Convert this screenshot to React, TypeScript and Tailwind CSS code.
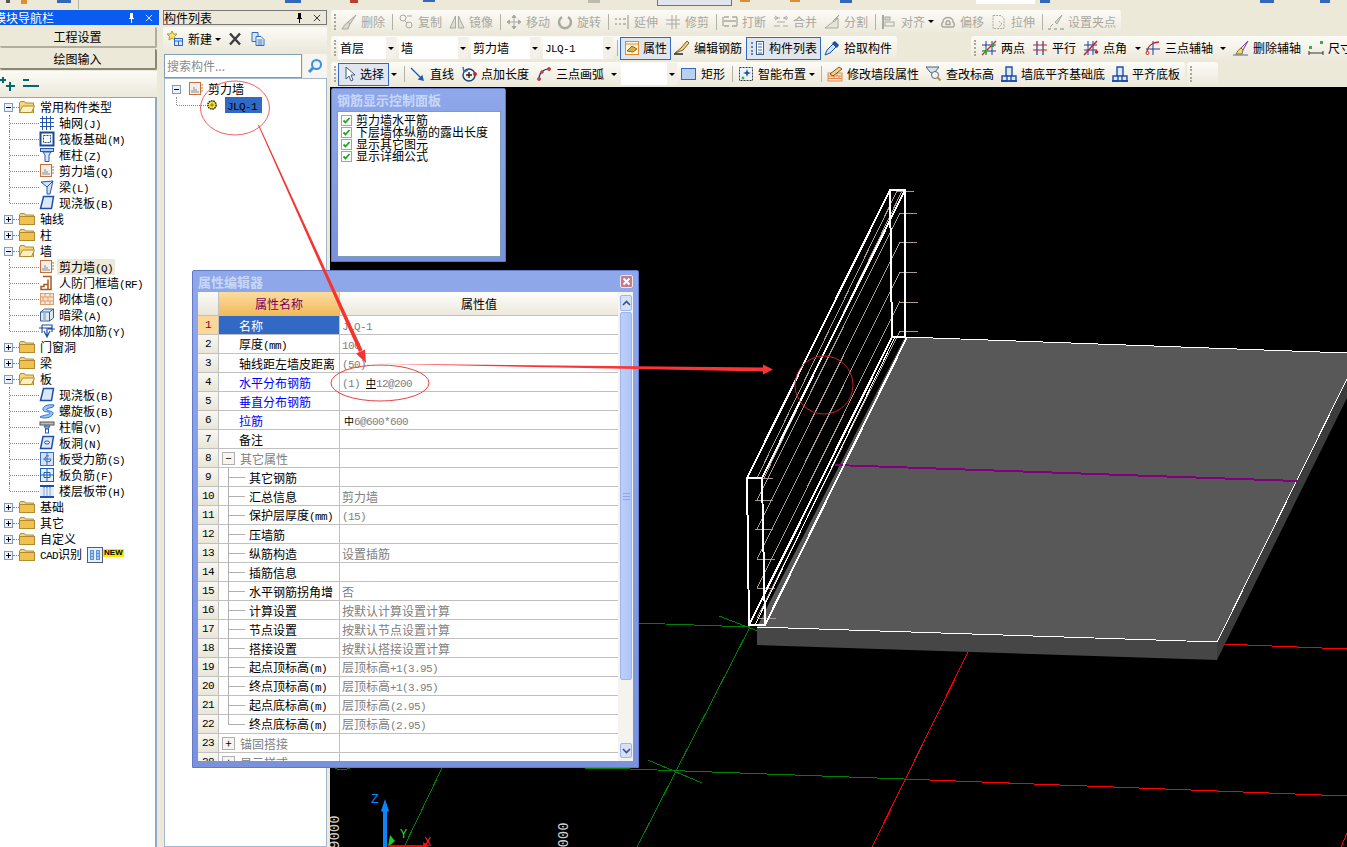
import React from "react";

const Txt = ({ t, className = "" }: { t: string; className?: string }) => (
  <span className={`whitespace-nowrap ${className}`}>
    {t.split(/([\x00-\x7f]+)/).map((s, i) =>
      i % 2 ? (
        <span key={i} className="font-['Liberation_Mono',monospace] text-[11px] tracking-[-0.6px]">
          {s}
        </span>
      ) : (
        s
      )
    )}
  </span>
);

const G = "#aaa99f";
const B = "#2456b0";
const icons: Record<string, React.ReactNode> = {
  grid: (
    <g stroke={B} fill="none">
      <path d="M3.5 1v14M7.5 1v14M11.5 1v14M1 3.5h14M1 7.5h14M1 11.5h14" />
    </g>
  ),
  raft: (
    <g fill="none" stroke="#1f4a8c">
      <rect x="1.5" y="1.5" width="13" height="13" strokeWidth="2" />
      <rect x="4.5" y="4.5" width="7" height="7" strokeDasharray="2 1" />
    </g>
  ),
  column: (
    <g stroke={B}>
      <rect x="1.5" y="1.5" width="13" height="3" fill="#b9d0f2" />
      <path d="M4 5l2 3v6.5h4V8l2-3z" fill="#dbe8fa" />
    </g>
  ),
  wall: (
    <g>
      <rect x="1.5" y="1.5" width="11" height="12" fill="#f2f0ec" stroke="#c8703c" />
      <path d="M3 12h8v-2H9V8H7V6H5v3H3z" fill="#bdbdbd" />
      <path d="M13 4h2M13 7h2M13 10h2" stroke="#c8703c" />
    </g>
  ),
  beam: (
    <g stroke={B}>
      <path d="M2 3l12-1-3 13H8V8z" fill="#cfe2f8" />
      <path d="M8 8l6-6" fill="none" />
    </g>
  ),
  slab: <path d="M4.5 1.5h10l-2 12h-11z" fill="#dbe8fa" stroke="#1c4fa8" strokeWidth="1.5" />,
  door: (
    <g fill="none" stroke="#a85a20" strokeWidth="1.5">
      <path d="M4 1.5h8v13H2v-3h3v-2H9M9 4.5V14" />
    </g>
  ),
  brick: (
    <g stroke="#e39a66" fill="#fbe6d4">
      <rect x="1.5" y="2.5" width="13" height="11" />
      <path d="M1.5 6h13M1.5 10h13M6 2.5V6M11 2.5V6M4 6v4M9 6v4M6 10v3.5M11 10v3.5" fill="none" />
    </g>
  ),
  hidden: (
    <g stroke="#365f8f">
      <path d="M1.5 5l4-3h9v9l-4 3h-9z" fill="#dfe9f4" />
      <path d="M1.5 5h9v9M10.5 5l4-3" fill="none" />
      <rect x="4" y="5.5" width="3" height="8" fill="#a9bfd8" stroke="none" />
    </g>
  ),
  wallbar: (
    <g fill="none" stroke="#1c4fa8" strokeWidth="1.2">
      <path d="M3 2h10v3H0M3 2v8M13 2v7M16 6H9M5 8l3 6 3-6M8 5v9" />
    </g>
  ),
  spiral: (
    <path d="M15 2C9 1 3 3 4 7c1 3 7 1 7 3 0 2-7 2-10 4 4 2 11 1 13-3 1-3-5-3-6-4-1-2 4-2 6-3z" fill="#9cc4f4" stroke="#2a6fd0" />
  ),
  cap: (
    <g stroke="#555">
      <rect x="1" y="3" width="14" height="3" fill="#bbb" />
      <path d="M5 7h6l-2 3H7z" fill="#8fb4e8" stroke={B} />
      <rect x="6.5" y="10" width="3" height="4" fill="#fff" stroke={B} />
    </g>
  ),
  hole: (
    <g stroke="#1c4fa8">
      <path d="M4 1.5h10.5l-2 12H1.5z" fill="#dbe8fa" strokeWidth="1.5" />
      <ellipse cx="8" cy="7.5" rx="2.5" ry="1.5" fill="#fff" />
    </g>
  ),
  force: (
    <g stroke="#3a6cc0" fill="#d5e3f8">
      <rect x="1.5" y="1.5" width="13" height="13" />
      <path d="M8 1.5v13M4 8h8a3 3 0 1 1-2-3" fill="none" />
    </g>
  ),
  neg: (
    <g stroke="#1c5fb0" fill="#e6effb">
      <rect x="1.5" y="1.5" width="13" height="13" />
      <path d="M1.5 8h13M8 1.5v13M5 5.5h6v5H5z" fill="none" />
    </g>
  ),
  band: (
    <g stroke="#1c4fa8" fill="none">
      <path d="M1 3h14M1 14h14" strokeWidth="2" />
      <path d="M5 4v9M8 4v9M11 4v9" />
      <rect x="1" y="5" width="14" height="8" fill="#cfe0f6" stroke="none" opacity=".6" />
    </g>
  ),
  cad: (
    <g>
      <rect x="0.5" y="0.5" width="15" height="15" fill="#e6effb" stroke="#48607c" />
      <path d="M3 3h4v10H3zM9 3h4v10H9z" fill="#5a94d8" />
      <path d="M4 5h2M4 8h2M4 11h2M10 5h2M10 8h2M10 11h2" stroke="#fff" />
    </g>
  ),
  gear: (
    <g>
      <circle cx="8" cy="8" r="5.5" fill="#ffee22" stroke="#222" strokeDasharray="2 1" strokeWidth="2" />
      <path d="M5 8h6M8 5v6" stroke="#555" />
    </g>
  ),
  newp: (
    <g>
      <path d="M5 0l1.5 3H10L7.5 5.5 8 9 5 7 2 9l.5-3.5L0 3h3.5z" fill="#f6e36a" stroke="#b39a22" />
      <rect x="7.5" y="7.5" width="8" height="7" fill="#dbe8fa" stroke="#2f6ac0" />
      <path d="M7.5 10h8M11.5 10v4.5" stroke="#2f6ac0" />
    </g>
  ),
  close: <path d="M3 2.5l10 11M13 2.5l-10 11" stroke="#3d3d3d" strokeWidth="2.4" fill="none" />,
  pages: (
    <g stroke="#2f6ac0" fill="#dbe8fa">
      <path d="M2 1.5h6v9H2z" />
      <path d="M6 5.5h5l3 3v6H6z" fill="#f3f7fd" />
      <path d="M7.5 9h5M7.5 11h5M7.5 13h5" fill="none" />
    </g>
  ),
  lens: (
    <g fill="none" stroke="#3e8fd8">
      <circle cx="9.5" cy="6.5" r="4.5" strokeWidth="2" fill="#e7f3fd" />
      <path d="M6 10l-4 4" strokeWidth="3" />
    </g>
  ),
  // grey icons of the disabled toolbar
  del: (
    <g stroke={G} fill="#d8d7ce">
      <path d="M15 1L7 8l2 2zM7 8c-2 1-5 5-6 7h6l2-5z" />
    </g>
  ),
  copy: (
    <g stroke={G} fill="none">
      <circle cx="5" cy="4" r="3" />
      <circle cx="11" cy="11" r="3" />
      <path d="M7 7l2 2M9 2h5" />
    </g>
  ),
  mirror: (
    <g stroke={G} fill="#e0dfd6">
      <path d="M6.5 2v12H1zM9.5 2v12H15z" />
    </g>
  ),
  move: <path d="M8 1v14M1 8h14M8 1L6 3.5h4zM8 15l-2-2.5h4zM1 8l2.5-2v4zM15 8l-2.5-2v4z" stroke={G} fill={G} />,
  rotate: <path d="M11 3a6 6 0 1 1-6 0" stroke={G} strokeWidth="2.5" fill="none" />,
  extend: <path d="M1 5h2M5 5h2M9 5h3M1 10h2M5 10h2M9 10h3M14 1v14" stroke={G} strokeWidth="1.3" fill="none" />,
  trim: <path d="M7 1v14M11 1v14M1 6h14M1 10h14" stroke={G} fill="none" />,
  brk: <path d="M2 3h5M10 3h5M2 12h5M10 12h5M2 7h12M1 3v9M15 3v9" stroke={G} strokeWidth="1.3" fill="none" />,
  merge: <path d="M1 4h6M10 4h5M1 12h6M10 12h5M4 8h8M2 2l3 2-3 2M14 2l-3 2 3 2" stroke={G} fill="none" />,
  split: (
    <g stroke={G} fill="#e6e5dc">
      <path d="M1 14L14 4v10z" />
      <path d="M15 1l-6 6 1 1z" />
    </g>
  ),
  align: (
    <g stroke={G} fill="#d8d7ce">
      <path d="M2 1v14" strokeWidth="2" />
      <rect x="4" y="3" width="5" height="3" />
      <rect x="4" y="8" width="9" height="4" fill="#efeee6" />
    </g>
  ),
  offset: (
    <g stroke={G} fill="none" strokeWidth="1.5">
      <path d="M3 13a3 3 0 0 1 0-5c0-6 10-6 10 0a3 3 0 0 1 0 5z" />
      <path d="M6 10.5c-1-5 5-5 4 0z" />
    </g>
  ),
  stretch: (
    <g stroke={G} fill="none">
      <path d="M2 1.5h8l3 3v10H2zM8 7l3 3-3 3" strokeDasharray="2 1" />
    </g>
  ),
  grip: (
    <g stroke={G} fill="#d8d7ce">
      <path d="M14 1L7 8l2 2zM5 10l-3 3" />
      <path d="M0 15h3M6 15h3M12 15h4" strokeWidth="1.5" />
    </g>
  ),
  // active toolbar icons
  prop: (
    <g>
      <rect x="1.5" y="1.5" width="13" height="13" fill="#fff6de" stroke="#e08a30" />
      <path d="M1.5 4h13" stroke="#e08a30" />
      <path d="M3 11l5-5 5 3-4 3z" fill="#d8b040" stroke="#8a6a20" />
    </g>
  ),
  pencil: (
    <g>
      <path d="M1 13l8-3 6-7-2-2-6 7z" fill="#f5d48a" stroke="#7a5a20" />
      <path d="M0 14h9" stroke="#222" strokeWidth="1.5" />
    </g>
  ),
  list: (
    <g>
      <path d="M1 3h2M1 7h2M1 11h2M1 14h2" stroke="#2f6ac0" strokeWidth="1.5" />
      <rect x="6.5" y="1.5" width="7" height="13" fill="#fff" stroke="#44607f" />
      <path d="M8 4h4M8 7h4M8 10h4M8 13h4" stroke="#2f6ac0" />
    </g>
  ),
  dropper: (
    <g>
      <path d="M1 15l2-5 6-6 3 3-6 6z" fill="#cfe2fa" stroke="#1c4fa8" />
      <path d="M8 3l3-2 4 4-2 3z" fill="#1c4fa8" />
    </g>
  ),
  twopt: (
    <g fill="none">
      <path d="M5 1v14M11 1v14M1 5h14M1 11h14" stroke="#1c3f9c" />
      <path d="M1 15L15 1" stroke="#d02020" strokeWidth="1.3" />
      <rect x="3" y="10" width="3" height="3" fill="#2fa82f" stroke="none" />
      <rect x="10" y="4" width="3" height="3" fill="#2fa82f" stroke="none" />
    </g>
  ),
  parar: (
    <g fill="none" strokeWidth="1.2">
      <path d="M5 1v14M11 1v14" stroke="#1c3f9c" />
      <path d="M1 5h14M1 10h14" stroke="#c82020" />
    </g>
  ),
  angle: (
    <g fill="none">
      <path d="M5 1v14M10 1v14M1 5h13M1 10h13" stroke="#1c3f9c" />
      <path d="M1 15L14 1" stroke="#d02020" strokeWidth="1.5" />
      <circle cx="13.5" cy="12" r="1.8" fill="#d02020" />
    </g>
  ),
  arcaxis: (
    <g fill="none">
      <path d="M8 1v14M1 9h14" stroke="#1c3f9c" />
      <path d="M2 13C2 6 8 2 14 2" stroke="#d02020" strokeWidth="1.3" />
      <circle cx="2.5" cy="13" r="1.5" fill="#fff" stroke="#d02020" />
    </g>
  ),
  delaxis: (
    <g>
      <path d="M0 15h15" stroke="#3a6cc0" />
      <path d="M15 1L8 8l2 2z" fill="#f0e8f8" stroke="#7a3aa0" />
      <path d="M8 8c-2 1-4 4-5 6h6l1-4z" fill="#f3d87a" stroke="#8a6a20" />
    </g>
  ),
  dim: (
    <g>
      <path d="M1 11v4M15 11v4M1 13h14" stroke="#333" />
      <rect x="1" y="6" width="3" height="3" fill="#3ab03a" />
      <rect x="12" y="1" width="3" height="3" fill="#3ab03a" />
    </g>
  ),
  cursor: <path d="M4 1v12l3-3 2 5 2-1-2-5h4z" fill="#fff" stroke="#3c5a80" />,
  line: <path d="M1 2l12 12M13 14l-1-4-3 3z" stroke="#1c5fb0" strokeWidth="1.4" fill="#1c5fb0" />,
  ptlen: (
    <g fill="none" stroke="#1c3f7c" strokeWidth="1.4">
      <circle cx="8" cy="9" r="6" />
      <path d="M5 9h6M8 6v6" stroke="#222" />
      <path d="M2 1l1 5 4-2" stroke="#3a6cc0" />
      <circle cx="14" cy="8" r="1.2" fill="#d02020" stroke="#d02020" />
    </g>
  ),
  arc: (
    <g fill="none">
      <path d="M3 13C3 7 7 3 13 3" stroke="#1c3f7c" strokeWidth="1.2" />
      <circle cx="3" cy="13" r="1.5" fill="#d04040" stroke="#d04040" />
      <circle cx="6" cy="6" r="1.3" fill="#d04040" stroke="#d04040" />
      <circle cx="13" cy="3" r="1.5" fill="#d04040" stroke="#d04040" />
    </g>
  ),
  rect: <rect x="0.5" y="2.5" width="14" height="11" fill="#b8d0f4" stroke="#2f6ac0" />,
  smart: (
    <g>
      <rect x="1.5" y="1.5" width="13" height="13" fill="#eef3fb" stroke="#3c3c3c" strokeDasharray="2 1" />
      <path d="M9 3l1 3 3 1-3 1-1 3-1-3-3-1 3-1z" fill="#1c4fa8" />
      <path d="M5 10l.7 1.3L7 12l-1.3.7L5 14l-.7-1.3L3 12l1.3-.7z" fill="#2fa82f" />
    </g>
  ),
  wallEdit: (
    <g>
      <rect x="1" y="7" width="14" height="8" fill="#fbe2cc" stroke="#e08a50" />
      <path d="M1 10h14M1 12.5h14M5 7v3M10 7v3M7 10v2.5M12 10v2.5" stroke="#e08a50" />
      <path d="M3 8l9-7 3 2-9 7z" fill="#f5d48a" stroke="#7a5a20" />
    </g>
  ),
  find: (
    <g>
      <path d="M0 1h13l-4 5v3L4 6z" fill="#d8e2ee" stroke="#4a6078" />
      <circle cx="9" cy="9" r="3.5" fill="#f3f7fd" stroke="#666" />
      <path d="M11.5 11.5l3 3" stroke="#c89020" strokeWidth="2" />
    </g>
  ),
  wallAlign: (
    <g stroke="#1c4fa8" fill="#dbe8fa" strokeWidth="1.4">
      <path d="M5 1h6v9H5z" />
      <path d="M1 10h5v5H1zM10 10h5v5h-5z" />
      <path d="M0 15h16" strokeWidth="1.8" />
    </g>
  ),
};

const Ico = ({ n, className = "", sz = "w-[16px] h-[16px]" }: { n: string; className?: string; sz?: string }) => (
  <svg viewBox="0 0 16 16" className={`${sz} shrink-0 ${className}`}>
    {icons[n]}
  </svg>
);

const Folder = ({ open }: { open: boolean }) => (
  <svg viewBox="0 0 16 12" className="w-[16px] h-[12px] shrink-0">
    <path d="M0.5 2l1-1.5h4l1 1.5h8v10h-14z" fill="#f6d777" stroke="#b08a30" />
    {open ? (
      <path d="M0.5 11.5l3-6.5h12l-3 6.5z" fill="#fdf0c0" stroke="#b08a30" />
    ) : (
      <rect x="0.5" y="3.5" width="15" height="8" fill="#f0c14c" stroke="#b08a30" />
    )}
  </svg>
);

const Exp = ({ open, className = "" }: { open: boolean; className?: string }) => (
  <svg viewBox="0 0 9 9" className={`w-[9px] h-[9px] shrink-0 ${className}`}>
    <rect x="0.5" y="0.5" width="8" height="8" fill="#eef2f8" stroke="#7f9db9" />
    <path d={open ? "M2 4.5h5" : "M2 4.5h5M4.5 2v5"} stroke="#000" />
  </svg>
);

const Arrow = ({ className = "" }: { className?: string }) => (
  <div className={`shrink-0 border-x-[3px] border-t-[3px] border-x-transparent border-t-black ${className}`} />
);

const Sep = () => <div className="w-px h-[16px] mr-[5px] shrink-0 bg-[#b4b2a4]" />;
const Handle = () => <div className="w-[3px] h-[16px] mr-[4px] shrink-0 border-l-2 border-dotted border-[#a8a695]" />;

const Tool = ({
  w,
  n,
  t,
  off,
  arrow,
}: {
  w: string;
  n: string;
  t: string;
  off?: boolean;
  arrow?: string;
}) => (
  <div className={`${w} h-full flex items-center shrink-0`}>
    <Ico n={n} />
    <Txt t={t} className={`ml-[4px] ${off ? "text-[#a9a89f]" : "text-black"}`} />
    {arrow && <Arrow className={arrow} />}
  </div>
);

const Combo = ({ w, t }: { w: string; t: string }) => (
  <div className={`${w} h-[22px] mr-[3px] flex items-center bg-white shrink-0`}>
    <Txt t={t} className="ml-[2px] flex-1" />
    <div className="w-[10px] h-full flex items-center justify-center bg-[#f2f0e8]">
      <Arrow />
    </div>
  </div>
);

const Bar = ({ className = "", children }: { className?: string; children: React.ReactNode }) => (
  <div className={`flex items-center shrink-0 rounded-[3px] pl-[3px] bg-linear-to-b from-[#fcfbf6] to-[#ece9dc] ${className}`}>
    {children}
  </div>
);

const Check = () => (
  <svg viewBox="0 0 11 11" className="w-[11px] h-[11px] shrink-0">
    <rect x="0.5" y="0.5" width="10" height="10" fill="#fff" stroke="#a5a598" />
    <path d="M2.5 5.5l2 2 4-4.5" stroke="#21a121" strokeWidth="1.8" fill="none" />
  </svg>
);

type Node = { t: string; open?: boolean; kids?: { t: string; n: string; hl?: boolean }[]; cad?: boolean };

const navTree: Node[] = [
  {
    t: "常用构件类型",
    open: true,
    kids: [
      { t: "轴网(J)", n: "grid" },
      { t: "筏板基础(M)", n: "raft" },
      { t: "框柱(Z)", n: "column" },
      { t: "剪力墙(Q)", n: "wall" },
      { t: "梁(L)", n: "beam" },
      { t: "现浇板(B)", n: "slab" },
    ],
  },
  { t: "轴线" },
  { t: "柱" },
  {
    t: "墙",
    open: true,
    kids: [
      { t: "剪力墙(Q)", n: "wall", hl: true },
      { t: "人防门框墙(RF)", n: "door" },
      { t: "砌体墙(Q)", n: "brick" },
      { t: "暗梁(A)", n: "hidden" },
      { t: "砌体加筋(Y)", n: "wallbar" },
    ],
  },
  { t: "门窗洞" },
  { t: "梁" },
  {
    t: "板",
    open: true,
    kids: [
      { t: "现浇板(B)", n: "slab" },
      { t: "螺旋板(B)", n: "spiral" },
      { t: "柱帽(V)", n: "cap" },
      { t: "板洞(N)", n: "hole" },
      { t: "板受力筋(S)", n: "force" },
      { t: "板负筋(F)", n: "neg" },
      { t: "楼层板带(H)", n: "band" },
    ],
  },
  { t: "基础" },
  { t: "其它" },
  { t: "自定义" },
  { t: "CAD识别", cad: true },
];

const NavTree = () => (
  <div className="flex-1 w-[157px] pt-[1px] bg-white border-t border-r-2 border-[#8fa8c4] overflow-hidden">
    {navTree.map((g) => (
      <div key={g.t}>
        <div className="h-[16px] flex items-center">
          <Exp open={!!g.open} className="ml-[4px]" />
          <div className="w-[6px] border-t border-dotted border-[#888] shrink-0" />
          <Folder open={!!g.open} />
          <Txt t={g.t} className="ml-[5px]" />
          {g.cad && (
            <>
              <Ico n="cad" className="ml-[5px]" />
              <span className="-mt-[5px] px-[1px] h-[8px] leading-[8px] bg-[#ffe600] font-['Liberation_Sans',sans-serif] font-bold text-[8px]">
                NEW
              </span>
            </>
          )}
        </div>
        {g.kids?.map((k, i) => (
          <div key={k.t + i} className="h-[16px] flex items-center">
            <div className="w-[9px] shrink-0" />
            <div
              className={`w-0 shrink-0 self-start border-l border-dotted border-[#888] ${
                i === g.kids!.length - 1 ? "h-[8px]" : "h-[16px]"
              }`}
            />
            <div className="w-[29px] shrink-0 border-t border-dotted border-[#888]" />
            <Ico n={k.n} />
            <div className={`ml-[2px] px-[2px] h-[16px] leading-[16px] ${k.hl ? "bg-[#ece9d8]" : ""}`}>
              <Txt t={k.t} />
            </div>
          </div>
        ))}
      </div>
    ))}
  </div>
);

type Row = { no: string; name: string; kind: string; val?: React.ReactNode };

const rows: Row[] = [
  { no: "1", name: "名称", kind: "sel", val: "JLQ-1" },
  { no: "2", name: "厚度(mm)", kind: "top", val: "100" },
  { no: "3", name: "轴线距左墙皮距离", kind: "top", val: " (50)" },
  {
    no: "4",
    name: "水平分布钢筋",
    kind: "blue",
    val: (
      <>
        <Txt t=" (1) " />
        <span className="text-black text-[10px] underline">中</span>
        <Txt t="12@200" />
      </>
    ),
  },
  { no: "5", name: "垂直分布钢筋", kind: "blue" },
  {
    no: "6",
    name: "拉筋",
    kind: "blue",
    val: (
      <>
        <span className="text-black text-[10px] ml-[2px]">中</span>
        <Txt t="6@600*600" />
      </>
    ),
  },
  { no: "7", name: "备注", kind: "top" },
  { no: "8", name: "其它属性", kind: "open" },
  { no: "9", name: "其它钢筋", kind: "child" },
  { no: "10", name: "汇总信息", kind: "child", val: "剪力墙" },
  { no: "11", name: "保护层厚度(mm)", kind: "child", val: " (15)" },
  { no: "12", name: "压墙筋", kind: "child" },
  { no: "13", name: "纵筋构造", kind: "child", val: "设置插筋" },
  { no: "14", name: "插筋信息", kind: "child" },
  { no: "15", name: "水平钢筋拐角增", kind: "child", val: "否" },
  { no: "16", name: "计算设置", kind: "child", val: "按默认计算设置计算" },
  { no: "17", name: "节点设置", kind: "child", val: "按默认节点设置计算" },
  { no: "18", name: "搭接设置", kind: "child", val: "按默认搭接设置计算" },
  { no: "19", name: "起点顶标高(m)", kind: "child", val: "层顶标高+1(3.95)" },
  { no: "20", name: "终点顶标高(m)", kind: "child", val: "层顶标高+1(3.95)" },
  { no: "21", name: "起点底标高(m)", kind: "child", val: "层顶标高(2.95)" },
  { no: "22", name: "终点底标高(m)", kind: "last", val: "层顶标高(2.95)" },
  { no: "23", name: "锚固搭接", kind: "closed" },
  { no: "28", name: "显示样式", kind: "closed" },
];

const NameCell = ({ r }: { r: Row }) => {
  if (r.kind === "open" || r.kind === "closed") {
    return (
      <div className="w-[121px] h-full shrink-0 flex items-center border-r border-[#c0c0c0]">
        <div className="ml-[3px] w-[13px] h-[13px] shrink-0 border border-[#b0b0b0] flex items-center justify-center leading-none text-[11px] bg-[#f6f5ef]">
          {r.kind === "open" ? "−" : "+"}
        </div>
        <Txt t={r.name} className="ml-[5px] pt-[2px] text-[#808080]" />
      </div>
    );
  }
  if (r.kind === "child" || r.kind === "last") {
    return (
      <div className="w-[121px] h-full shrink-0 flex items-center border-r border-[#c0c0c0]">
        <div className="w-[9px] shrink-0" />
        <div className={`w-0 shrink-0 self-start border-l border-[#b0b0b0] ${r.kind === "last" ? "h-[10px]" : "h-[19px]"}`} />
        <div className="w-[16px] shrink-0 border-t border-[#b0b0b0]" />
        <Txt t={r.name} className="ml-[4px] pt-[2px]" />
      </div>
    );
  }
  const tone = r.kind === "sel" ? "bg-[#316ac5] text-white" : r.kind === "blue" ? "text-[#0000ff]" : "";
  return (
    <div className={`w-[121px] h-full shrink-0 flex items-center pl-[20px] border-r border-[#c0c0c0] ${tone}`}>
      <Txt t={r.name} className="pt-[2px]" />
    </div>
  );
};

const PropertyEditor = () => (
  <div className="absolute left-[192px] top-[270px] w-[447px] h-[498px] rounded-t-[2px] px-[5px] pb-[6px] flex flex-col border border-[#6278c8] bg-linear-to-b from-[#8ea8ea] to-[#7a92de]">
    <div className="h-[21px] shrink-0 flex items-center justify-between text-[13px] font-bold text-[#c9d7f7]">
      <span>属性编辑器</span>
      <div className="w-[13px] h-[13px] rounded-[2px] border border-[#e8e8e8] bg-[#c8798a] flex items-center justify-center">
        <svg viewBox="0 0 9 9" className="w-[9px] h-[9px]">
          <path d="M1.5 1.5l6 6M7.5 1.5l-6 6" stroke="#fff" strokeWidth="2" />
        </svg>
      </div>
    </div>
    <div className="flex-1 flex bg-white overflow-hidden">
      <div className="w-[420px] shrink-0 overflow-hidden">
        <div className="h-[24px] flex items-stretch border-b border-[#c0c0c0]">
          <div className="w-[21px] shrink-0 bg-linear-to-b from-[#fbfaf5] to-[#e9e6d8] border-r border-[#c0c0c0]" />
          <div className="w-[121px] shrink-0 flex items-center justify-center text-[#7a0060] bg-linear-to-b from-[#fbdc9f] to-[#f2ba5a] border-r border-[#c0c0c0]">
            属性名称
          </div>
          <div className="flex-1 flex items-center justify-center bg-linear-to-b from-[#fdfdfb] to-[#ece9dc]">属性值</div>
        </div>
        {rows.map((r) => (
          <div key={r.no} className="h-[19px] flex items-center border-b border-[#c0c0c0]">
            <div
              className={`w-[21px] h-full shrink-0 flex items-center justify-center font-['Liberation_Mono',monospace] text-[11px] tracking-[-0.6px] border-r border-[#c0c0c0] ${
                r.no === "1" ? "bg-[#fbd79a] text-[#7a0030]" : "bg-linear-to-b from-[#f8f7f1] to-[#e9e6d8]"
              }`}
            >
              {r.no}
            </div>
            <NameCell r={r} />
            <div className="flex-1 pl-[2px] pt-[1px] text-[#808080] whitespace-pre">
              {typeof r.val === "string" ? <Txt t={r.val} /> : r.val}
            </div>
          </div>
        ))}
      </div>
      <div className="flex-1 flex flex-col pl-[1px] py-[3px] bg-[#f4f3ee]">
        <div className="h-[16px] mx-[1px] shrink-0 rounded-[2px] border border-[#9db4ee] bg-[#d5e0fb] flex items-center justify-center">
          <svg viewBox="0 0 9 6" className="w-[9px] h-[6px]">
            <path d="M1 5l3.5-3.5L8 5" stroke="#3c4f86" strokeWidth="1.6" fill="none" />
          </svg>
        </div>
        <div className="h-[368px] mt-[1px] mx-[1px] shrink-0 rounded-[2px] border border-[#9db4ee] bg-linear-to-r from-[#bccffa] to-[#b0c5f7] flex items-center justify-center">
          <div className="w-[7px] h-[7px] border-y border-[#8ea6e2] flex items-center">
            <div className="w-full h-px bg-[#8ea6e2]" />
          </div>
        </div>
        <div className="flex-1" />
        <div className="h-[15px] mx-[1px] shrink-0 rounded-[2px] border border-[#9db4ee] bg-[#d5e0fb] flex items-center justify-center">
          <svg viewBox="0 0 9 6" className="w-[9px] h-[6px]">
            <path d="M1 1l3.5 3.5L8 1" stroke="#3c4f86" strokeWidth="1.6" fill="none" />
          </svg>
        </div>
      </div>
    </div>
  </div>
);

const RebarPanel = () => (
  <div className="absolute left-[1px] top-[1px] w-[175px] h-[174px] pl-[5px] pr-[4px] pb-[4px] flex flex-col rounded-t-[2px] border border-[#5f77c8] bg-linear-to-b from-[#8ea8ea] to-[#7a92de]">
    <div className="h-[22px] shrink-0 flex items-center text-[13px] font-bold text-[#c9d7f7]">钢筋显示控制面板</div>
    <div className="flex-1 bg-white border border-[#7f9db9] pl-[3px] pt-[2px]">
      {["剪力墙水平筋", "下层墙体纵筋的露出长度", "显示其它图元", "显示详细公式"].map((t) => (
        <div key={t} className="h-[12px] flex items-center">
          <Check />
          <span className="ml-[4px] leading-[12px]">{t}</span>
        </div>
      ))}
    </div>
  </div>
);

const rebarY = [500, 529, 559, 588, 618];

const Scene = () => (
  <svg viewBox="330 87 1017 760" className="absolute inset-0 w-[1017px] h-[760px]">
    <g shapeRendering="crispEdges" fill="none">
      <path d="M637 623L750 627M719 616L758 631M750 627L637 847M630 769L904 779M648 760L702 783M442 768L404 847" stroke="#008000" />
      <path d="M335 768q7 4 15 0M585 768h45" stroke="#008000" />
      <path d="M1222 644L1347 649M968 652L872 847M904 779L1347 796M1347 833L1341 847" stroke="#ff0000" />
    </g>
    <polygon points="1217,642 1347,379 1347,398 1217,660" fill="#3c3c3c" />
    <polygon points="757,627 1217,642 1217,660 757,645" fill="#464646" />
    <polygon points="905,337 1347,353 1347,379 1217,642 757,627" fill="#585858" />
    <g shapeRendering="crispEdges" fill="none">
      <path d="M905 337L1347 353M757 627L1217 642" stroke="#fff" />
      <path d="M1217 642L1347 379" stroke="#fff" />
      <path d="M835 465L1297 481" stroke="#800080" strokeWidth="2" />
      <g stroke="#a89a94">
        <path d="M897 191h17M899 213h18M899 242h18M899 272h18M899 302h19M899 331h19" />
        <path d="M755 478h18M755 500h18M755 529h18M757 559h18M757 588h18M758 618h18" />
        <path d="M757 478L897 191M764 478L902 191" />
        {rebarY.map((y) => (
          <path key={y} d={`M757 ${y}L900 ${y - 287}`} />
        ))}
      </g>
      <g stroke="#fff" strokeWidth="2">
        <path d="M890 190h15v147h-13zM747 478h15l3 147h-16z" />
        <path d="M890 190L747 478M905 190L762 478M892 337L749 625M907 337L765 625" />
        <path d="M895 337L755 625" strokeWidth="1" />
      </g>
    </g>
    {/* axis marker in the corner */}
    <rect x="383" y="810" width="4" height="37" fill="#0a84ff" />
    <path d="M385 799l-4 12 4 2 4-2z" fill="#0a84ff" />
    <path d="M388 847l2-12 5 6z" fill="#22c822" />
    <path d="M388 845h38v2h-38zM423 842l7 4-7 2z" fill="#ff0000" />
    <text x="371" y="803" fontSize="13" fill="#0a84ff" fontFamily="Liberation Mono">Z</text>
    <text x="400" y="838" fontSize="12" fill="#22e022" fontFamily="Liberation Mono">Y</text>
    <text x="424" y="846" fontSize="12" fill="#ff2020" fontFamily="Liberation Mono">X</text>
    <text transform="translate(339 849) rotate(-90)" fontSize="14" fill="#cfcfcf" fontFamily="DejaVu Sans Mono">9000</text>
    <text transform="translate(568 856) rotate(-90)" fontSize="14" fill="#cfcfcf" fontFamily="DejaVu Sans Mono">9000</text>
  </svg>
);

const Notes = () => (
  <svg viewBox="0 0 1347 847" className="absolute inset-0 w-[1347px] h-[847px] pointer-events-none">
    <g fill="none" strokeWidth="1">
      <ellipse cx="235" cy="108" rx="34.5" ry="27" stroke="#f06060" />
      <ellipse cx="380" cy="383" rx="49" ry="18" stroke="#e84040" />
      <circle cx="824" cy="385" r="29" stroke="#c82020" />
    </g>
    <polygon points="258,125 259,125 362.5,350 359,352" fill="#f53333" />
    <polygon points="366,363 356,353.5 365,349.5" fill="#f53333" />
    <polygon points="378,363.8 763,367.5 763,371.5" fill="#ff3333" />
    <polygon points="773,369.5 763,364.5 763,374.5" fill="#ff3333" />
  </svg>
);

export default function App() {
  return (
    <div className="relative w-[1347px] h-[847px] overflow-hidden flex flex-col bg-[#ece9d8] text-black text-[12px] leading-[14px] font-['Noto_Sans_CJK_SC',sans-serif]">
      {/* clipped menu strip along the top edge */}
      <svg viewBox="0 0 1347 10" className="w-[1347px] h-[10px] shrink-0">
        <path d="M6 0h4v3H6z" fill="#555" />
        <path d="M21 0h6v4h-6zM740 0h10v2h-10zM790 0h10v2h-10z" fill="#d89030" />
        <path d="M57 0h14v3H57zM285 0h16v3h-16zM423 0h12v2h-12zM840 0h12v3h-12zM1040 0h10v3h-10zM1260 0h14v3h-14zM1320 0h10v3h-10z" fill="#3467b8" />
        <path d="M350 0h8v3h-8z" fill="#b84030" />
        <path d="M78 0h1v9h-1z" fill="#b4b2a4" />
        <path d="M588 0h12v3h-12z" fill="#bcbcb0" />
        <rect x="657.5" y="-2" width="74" height="7.5" fill="#e1e6ee" stroke="#5078b8" />
        <rect x="976" y="-2" width="59" height="6" fill="#fff" />
      </svg>

      <div className="flex-1 flex min-h-0">
        {/* module navigator */}
        <div className="w-[159px] shrink-0 flex flex-col">
          <div className="h-[15px] shrink-0 flex items-center bg-[#0a5cf0] text-white overflow-hidden">
            <span className="-ml-[6px] flex-1">模块导航栏</span>
            <svg viewBox="0 0 9 10" className="w-[9px] h-[10px] mr-[9px]">
              <path d="M3 0h3v5h1v1H5v4H4V6H2V5h1z" fill="#fff" />
            </svg>
            <svg viewBox="0 0 9 9" className="w-[8px] h-[8px] mr-[6px]">
              <path d="M1 1l7 7M8 1l-7 7" stroke="#fff" />
            </svg>
          </div>
          <div className="w-[157px] h-[21px] mt-[2px] shrink-0 flex items-center justify-center rounded-[2px] border-r-2 border-b-2 border-[#b0ae9c] bg-[#ece9d8]">工程设置</div>
          <div className="w-[157px] h-[21px] mt-[1px] shrink-0 flex items-center justify-center rounded-[2px] border-r-2 border-b-2 border-[#8a8874] bg-[#ece9d8]">绘图输入</div>
          <div className="w-[157px] h-[26px] mt-[1px] shrink-0 flex items-center bg-linear-to-b from-[#fbfaf5] to-[#ece9dc]">
            <svg viewBox="0 0 40 16" className="w-[40px] h-[16px]">
              <path d="M0 4h6M3 1v6M6 10h9M10 6v9M23 4h6M23 10h16" stroke="#006a6a" strokeWidth="2" fill="none" />
            </svg>
          </div>
          <NavTree />
        </div>

        {/* component list */}
        <div className="w-[164px] ml-[4px] shrink-0 flex flex-col">
          <div className="h-[15px] shrink-0 flex items-center border border-[#777] bg-[#ece9d8] overflow-hidden">
            <span className="flex-1">构件列表</span>
            <svg viewBox="0 0 9 10" className="w-[9px] h-[10px] mr-[9px]">
              <path d="M3 0h3v5h1v1H5v4H4V6H2V5h1z" fill="#000" />
            </svg>
            <svg viewBox="0 0 9 9" className="w-[8px] h-[8px] mr-[5px]">
              <path d="M1 1l7 7M8 1l-7 7" stroke="#222" />
            </svg>
          </div>
          <div className="h-[24px] mt-[2px] shrink-0 flex items-center rounded-[2px] pl-[4px] bg-linear-to-b from-[#fcfbf6] to-[#ece9dc]">
            <Ico n="newp" />
            <span className="ml-[5px]">新建</span>
            <Arrow className="ml-[3px]" />
            <Ico n="close" className="ml-[6px]" />
            <Ico n="pages" className="ml-[7px]" />
          </div>
          <div className="h-[25px] mt-[2px] shrink-0 flex items-center">
            <div className="w-[138px] h-[24px] ml-[1px] flex items-center pl-[2px] bg-white border border-[#7f9db9] text-[#8a8a8a]">搜索构件...</div>
            <div className="w-[24px] h-[24px] ml-[1px] flex items-center justify-center rounded-[2px] bg-[#f6f5ef]">
              <Ico n="lens" />
            </div>
          </div>
          <div className="flex-1 ml-[1px] bg-white border border-[#a3b9cf]">
            <div className="h-[16px] mt-[2px] flex items-center pl-[7px]">
              <Exp open />
              <Ico n="wall" className="ml-[7px]" />
              <span className="ml-[4px]">剪力墙</span>
            </div>
            <div className="h-[16px] flex items-center">
              <div className="w-[11px] shrink-0" />
              <div className="w-0 h-[8px] self-start border-l border-dotted border-[#888]" />
              <div className="w-[29px] shrink-0 border-t border-dotted border-[#888]" />
              <Ico n="gear" sz="w-[12px] h-[12px]" />
              <div className="ml-[7px] w-[37px] h-[16px] pl-[2px] leading-[16px] bg-[#316ac5]">
                <Txt t="JLQ-1" />
              </div>
            </div>
          </div>
        </div>

        {/* toolbars and 3D view */}
        <div className="w-[1017px] ml-[3px] shrink-0 flex flex-col min-h-0">
          <Bar className="w-[790px] h-[23px] ml-[1px]">
            <Handle />
            <Tool off w="w-[51px]" n="del" t="删除" />
            <Sep />
            <Tool off w="w-[51px]" n="copy" t="复制" />
            <Tool off w="w-[51px]" n="mirror" t="镜像" />
            <Sep />
            <Tool off w="w-[51px]" n="move" t="移动" />
            <Tool off w="w-[51px]" n="rotate" t="旋转" />
            <Sep />
            <Tool off w="w-[51px]" n="extend" t="延伸" />
            <Tool off w="w-[51px]" n="trim" t="修剪" />
            <Sep />
            <Tool off w="w-[51px]" n="brk" t="打断" />
            <Tool off w="w-[51px]" n="merge" t="合并" />
            <Tool off w="w-[51px]" n="split" t="分割" />
            <Sep />
            <Tool off w="w-[59px]" n="align" t="对齐" arrow="ml-[3px]" />
            <Tool off w="w-[51px]" n="offset" t="偏移" />
            <Tool off w="w-[51px]" n="stretch" t="拉伸" />
            <Sep />
            <Tool off w="w-[70px]" n="grip" t="设置夹点" />
          </Bar>

          <div className="h-[24px] mt-[3px] shrink-0 flex">
            <Bar className="w-[566px] h-full ml-[1px]">
              <Handle />
              <Combo w="w-[58px] -ml-[3px]" t="首层" />
              <Combo w="w-[69px]" t="墙" />
              <Combo w="w-[69px]" t="剪力墙" />
              <Combo w="w-[70px]" t="JLQ-1" />
              <div className="w-px h-[16px] ml-[1px] mr-[2px] bg-[#b4b2a4]" />
              <div className="w-[51px] h-[23px] shrink-0 flex items-center pl-[3px] border border-[#316ac5] bg-[#e1e6ee]">
                <Ico n="prop" />
                <span className="ml-[3px]">属性</span>
              </div>
              <div className="w-[3px]" />
              <Tool w="w-[72px]" n="pencil" t="编辑钢筋" />
              <div className="w-[75px] h-[23px] shrink-0 flex items-center pl-[3px] border border-[#316ac5] bg-[#e1e6ee]">
                <Ico n="list" />
                <span className="ml-[3px]">构件列表</span>
              </div>
              <div className="w-[3px]" />
              <Tool w="w-[70px]" n="dropper" t="拾取构件" />
            </Bar>
            <Bar className="w-[376px] h-full ml-[74px] rounded-r-none">
              <Handle />
              <Tool w="w-[51px]" n="twopt" t="两点" />
              <Tool w="w-[51px]" n="parar" t="平行" />
              <Tool w="w-[62px]" n="angle" t="点角" arrow="ml-[8px]" />
              <Tool w="w-[88px]" n="arcaxis" t="三点辅轴" arrow="ml-[7px]" />
              <Tool w="w-[75px]" n="delaxis" t="删除辅轴" />
              <Tool w="w-[50px]" n="dim" t="尺寸" />
            </Bar>
          </div>

          <div className="h-[24px] mt-[2px] shrink-0 flex">
            <Bar className="w-[854px] h-full ml-[1px]">
              <Handle />
              <div className="w-[51px] h-[23px] -ml-[3px] shrink-0 flex items-center pl-[3px] border border-[#316ac5] bg-[#e1e6ee]">
                <Ico n="cursor" />
                <span className="ml-[2px]">选择</span>
              </div>
              <Arrow className="ml-[2px]" />
              <div className="w-px h-[16px] ml-[7px] mr-[5px] bg-[#b4b2a4]" />
              <Tool w="w-[51px]" n="line" t="直线" />
              <Tool w="w-[75px]" n="ptlen" t="点加长度" />
              <Tool w="w-[83px]" n="arc" t="三点画弧" arrow="ml-[7px]" />
              <div className="w-[2px]" />
              <Combo w="w-[56px]" t="" />
              <div className="w-[1px]" />
              <Tool w="w-[51px]" n="rect" t="矩形" />
              <Sep />
              <Tool w="w-[83px]" n="smart" t="智能布置" arrow="ml-[3px]" />
              <Sep />
              <Tool w="w-[99px]" n="wallEdit" t="修改墙段属性" />
              <Tool w="w-[75px]" n="find" t="查改标高" />
              <Tool w="w-[111px]" n="wallAlign" t="墙底平齐基础底" />
              <Tool w="w-[70px]" n="wallAlign" t="平齐底板" />
            </Bar>
            <Bar className="w-[31px] h-full ml-[2px]">
              <Handle />
            </Bar>
          </div>

          <div className="flex-1 mt-[1px] relative bg-black overflow-hidden">
            <Scene />
            <RebarPanel />
          </div>
        </div>
      </div>

      <PropertyEditor />
      <Notes />
    </div>
  );
}
